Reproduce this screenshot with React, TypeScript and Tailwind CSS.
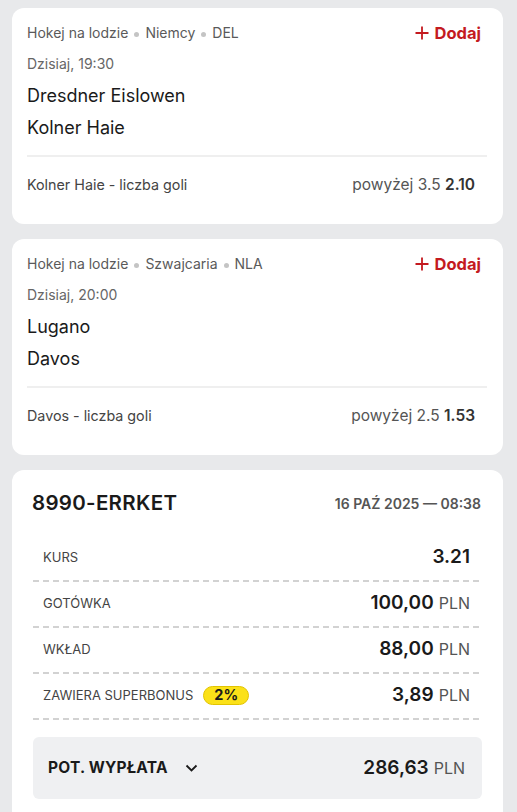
import React from "react";

function Dot() {
  return <span className="mx-[6px] inline-block h-[5px] w-[5px] rounded-full bg-[#c4c4c4] align-middle" />;
}

function Plus() {
  return (
    <svg width="14" height="14" viewBox="0 0 14 14" fill="none" className="mr-[6px]">
      <path d="M7 0.5V13.5M0.5 7H13.5" stroke="#c41a1f" strokeWidth="1.8" />
    </svg>
  );
}

function EventCard(props: { league: string[]; time: string; home: string; away: string; market: string; pick: string; odds: string }) {
  return (
    <div className="rounded-[12px] bg-white pl-[15px] pr-[16px] pt-[15px] pb-[29px]">
      <div className="flex items-center justify-between h-[20px]">
        <div className="text-[14px] leading-[20px] text-[#5a5a5a]">
          {props.league[0]}
          <Dot />
          {props.league[1]}
          <Dot />
          {props.league[2]}
        </div>
        <div className="flex items-center pr-[6px] text-[16.5px] font-bold text-[#c41a1f]">
          <Plus />
          Dodaj
        </div>
      </div>
      <div className="mt-[11px] text-[14px] leading-[20px] text-[#666]">{props.time}</div>
      <div className="mt-[9px] text-[18px] leading-[26px] text-[#1a1a1a]">{props.home}</div>
      <div className="mt-[6px] text-[18px] leading-[26px] text-[#1a1a1a]">{props.away}</div>
      <div className="mt-[14px] h-[2px] bg-[#efefef]" />
      <div className="mt-[18px] flex items-center justify-between pr-[12px]">
        <div className="text-[14.3px] leading-[20px] text-[#444]">{props.market}</div>
        <div className="text-[15.5px] leading-[20px] text-[#555]">
          {props.pick} <span className="font-semibold text-[#333]">{props.odds}</span>
        </div>
      </div>
    </div>
  );
}

function Dashed() {
  return <div className="h-[2px] bg-[repeating-linear-gradient(to_right,#d2d2d2_0px,#d2d2d2_6px,transparent_6px,transparent_10px)]" />;
}

function Row(props: { label: React.ReactNode; value: string; unit?: string }) {
  return (
    <>
      <div className="flex items-center justify-between pl-[10px] pr-[12px] pt-[9px] pb-[11px]">
        <div className="flex items-center text-[13px] leading-[20px] text-[#444]">{props.label}</div>
        <div className="leading-[24px] text-[#1a1a1a]">
          <span className="text-[19px] font-semibold">{props.value}</span>
          {props.unit && <span className="ml-[5px] text-[16px] text-[#555]">{props.unit}</span>}
        </div>
      </div>
      <Dashed />
    </>
  );
}

export default function App() {
  return (
    <div className="min-h-[812px] bg-[#e8e9eb] pl-[12px] pr-[14px] pt-[8px] flex flex-col gap-[15px]" style={{ fontFamily: "Inter, 'Noto Sans', sans-serif" }}>
      <EventCard
        league={["Hokej na lodzie", "Niemcy", "DEL"]}
        time="Dzisiaj, 19:30"
        home="Dresdner Eislowen"
        away="Kolner Haie"
        market="Kolner Haie - liczba goli"
        pick="powyżej 3.5"
        odds="2.10"
      />
      <EventCard
        league={["Hokej na lodzie", "Szwajcaria", "NLA"]}
        time="Dzisiaj, 20:00"
        home="Lugano"
        away="Davos"
        market="Davos - liczba goli"
        pick="powyżej 2.5"
        odds="1.53"
      />
      <div className="rounded-t-[12px] bg-white px-[21px] pt-[19px] pb-[20px]">
        <div className="flex items-center justify-between h-[28px] pr-[1px]">
          <div className="-ml-[1px] text-[20.5px] font-semibold text-[#1a1a1a] tracking-[0.3px]">8990-ERRKET</div>
          <div className="text-[14px] font-semibold text-[#555]">16 PAŹ 2025 — 08:38</div>
        </div>
        <div className="mt-[19px]">
          <Row label="KURS" value="3.21" />
          <Row label="GOTÓWKA" value="100,00" unit="PLN" />
          <Row label="WKŁAD" value="88,00" unit="PLN" />
          <Row
            label={
              <>
                ZAWIERA SUPERBONUS
                <span className="ml-[10px] inline-flex h-[19px] items-center rounded-full border border-[#e2c400] bg-[#fbe118] px-[10px] text-[14.5px] font-bold text-[#1a1a1a]">
                  2%
                </span>
              </>
            }
            value="3,89"
            unit="PLN"
          />
        </div>
        <div className="mt-[17px] flex h-[62px] items-center justify-between rounded-[6px] bg-[#eff0f2] pl-[15px] pr-[17px]">
          <div className="flex items-center text-[15.5px] font-bold text-[#1a1a1a] tracking-[0.2px]">
            POT. WYPŁATA
            <svg width="13" height="8" viewBox="0 0 13 8" fill="none" className="ml-[17px]">
              <path d="M1.5 1.5L6.5 6.5L11.5 1.5" stroke="#1a1a1a" strokeWidth="1.8" />
            </svg>
          </div>
          <div className="leading-[24px] text-[#1a1a1a]">
            <span className="text-[19px] font-semibold">286,63</span>
            <span className="ml-[5px] text-[16px] text-[#555]">PLN</span>
          </div>
        </div>
      </div>
    </div>
  );
}
